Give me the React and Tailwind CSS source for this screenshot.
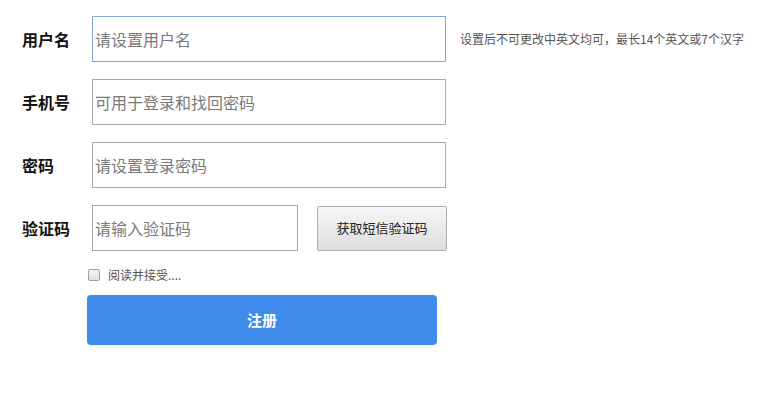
import React from 'react';

const font = { fontFamily: '"Noto Sans CJK SC", "Liberation Sans", sans-serif' };

const Field = ({ label, placeholder, focused, width = 'w-[354px]' }) => (
  <input
    placeholder={placeholder}
    aria-label={label}
    className={`h-[46px] ${width} border bg-white pl-[2px] pr-[3px] text-[16px] text-[#333] outline-none placeholder:text-[#7a7a7a] ${focused ? 'border-[#80a6dc]' : 'border-[#a9a9a9]'}`}
  />
);

const Row = ({ label, children }) => (
  <div className="flex items-center">
    <label className="w-[70px] text-[16px] font-bold text-[#111]">{label}</label>
    {children}
  </div>
);

export default function App() {
  return (
    <div className="min-h-screen bg-white pl-[22px] pt-[16px]" style={font}>
      <div className="flex flex-col gap-[17px]">
        <Row label="用户名">
          <Field label="用户名" placeholder="请设置用户名" focused />
          <span className="ml-[14px] text-[12px] text-[#555]">设置后不可更改中英文均可，最长14个英文或7个汉字</span>
        </Row>
        <Row label="手机号">
          <Field label="手机号" placeholder="可用于登录和找回密码" />
        </Row>
        <Row label="密码">
          <Field label="密码" placeholder="请设置登录密码" />
        </Row>
        <Row label="验证码">
          <Field label="验证码" placeholder="请输入验证码" width="w-[206px]" />
          <button className="ml-[19px] h-[45px] w-[130px] rounded-[2px] border border-[#adadad] bg-gradient-to-b from-[#f6f6f6] to-[#dddddd] text-[13px] text-[#222]">
            获取短信验证码
          </button>
        </Row>
      </div>

      <div className="ml-[66px] mt-[17px] flex h-[13px] items-center gap-[8px]">
        <input
          type="checkbox"
          className="h-[12px] w-[12px] appearance-none rounded-[2px] border border-[#a0a0a0] bg-gradient-to-b from-[#f4f4f4] to-[#dedede]"
        />
        <span className="text-[12px] text-[#555]">阅读并接受....</span>
      </div>

      <button className="ml-[65px] mt-[14px] h-[50px] w-[350px] rounded-[4px] bg-[#3f8bec] text-[15px] font-bold text-white">
        注册
      </button>
    </div>
  );
}
